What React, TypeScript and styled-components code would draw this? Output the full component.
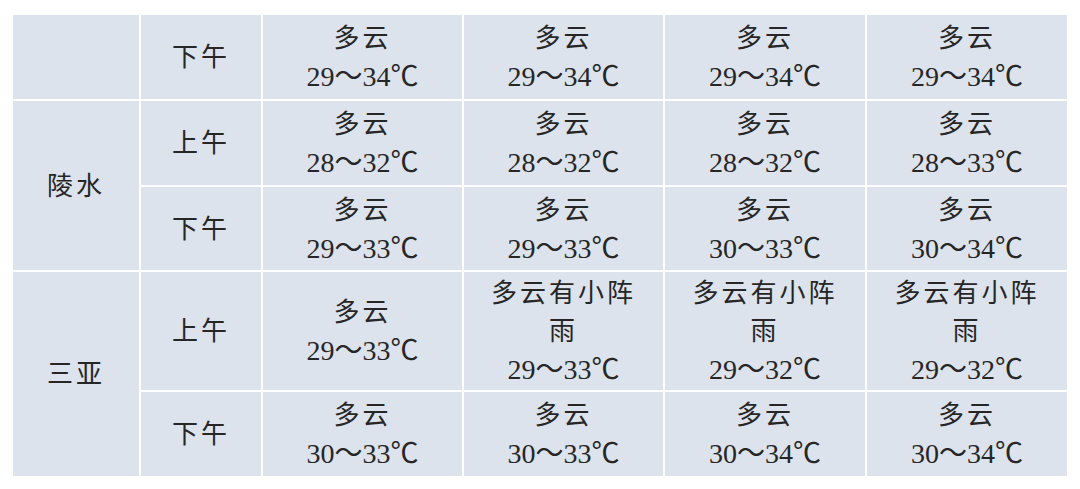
import React from 'react';
import styled, { createGlobalStyle } from 'styled-components';

const GlobalStyle = createGlobalStyle`
    html, body {
        margin: 0;
        padding: 0;
        background: #ffffff;
    }
`;

const Page = styled.div`
    padding: 15px 13px 17px 13px;
    width: 1080px;
    box-sizing: border-box;
`;

const Grid = styled.div`
    display: grid;
    grid-template-columns: 126px 120px 199px 199px 200px 200px;
    grid-template-rows: 84px 84px 83px 118px 84px;
    gap: 2px;
    background: #ffffff;
    font-family: "Liberation Serif", "Noto Sans CJK SC", serif;
    color: #262626;
`;

const Cell = styled.div<{ $row?: string }>`
    grid-row: ${(p) => p.$row || 'auto'};
    background: #dce3ed;
    display: flex;
    flex-direction: column;
    align-items: center;
    justify-content: center;
    text-align: center;
    padding: 2px 16px 0 16px;
    box-sizing: border-box;
`;

const Label = styled.span`
    font-size: 26px;
    letter-spacing: 3px;
    line-height: 38px;
`;

const Line = styled.span`
    font-size: 26px;
    line-height: 38px;
    letter-spacing: 3px;
`;

const Temp = styled.span`
    font-size: 28px;
    line-height: 38px;
`;

type Forecast = { sky: string; temp: string };

type Row = { period: string; days: Forecast[] };

const rows: Row[] = [
    {
        period: '下午',
        days: [
            { sky: '多云', temp: '29～34℃' },
            { sky: '多云', temp: '29～34℃' },
            { sky: '多云', temp: '29～34℃' },
            { sky: '多云', temp: '29～34℃' },
        ],
    },
    {
        period: '上午',
        days: [
            { sky: '多云', temp: '28～32℃' },
            { sky: '多云', temp: '28～32℃' },
            { sky: '多云', temp: '28～32℃' },
            { sky: '多云', temp: '28～33℃' },
        ],
    },
    {
        period: '下午',
        days: [
            { sky: '多云', temp: '29～33℃' },
            { sky: '多云', temp: '29～33℃' },
            { sky: '多云', temp: '30～33℃' },
            { sky: '多云', temp: '30～34℃' },
        ],
    },
    {
        period: '上午',
        days: [
            { sky: '多云', temp: '29～33℃' },
            { sky: '多云有小阵雨', temp: '29～33℃' },
            { sky: '多云有小阵雨', temp: '29～32℃' },
            { sky: '多云有小阵雨', temp: '29～32℃' },
        ],
    },
    {
        period: '下午',
        days: [
            { sky: '多云', temp: '30～33℃' },
            { sky: '多云', temp: '30～33℃' },
            { sky: '多云', temp: '30～34℃' },
            { sky: '多云', temp: '30～34℃' },
        ],
    },
];

// 地名单元格所在行（合并单元格）
const places: Record<number, { name: string; span: string }> = {
    0: { name: '', span: '1 / 2' },
    1: { name: '陵水', span: '2 / 4' },
    3: { name: '三亚', span: '4 / 6' },
};

export default function App() {
    return (
        <Page>
            <GlobalStyle />
            <Grid>
                {rows.map((row, i) => (
                    <React.Fragment key={i}>
                        {places[i] && (
                            <Cell $row={places[i].span}>
                                <Label>{places[i].name}</Label>
                            </Cell>
                        )}
                        <Cell>
                            <Label>{row.period}</Label>
                        </Cell>
                        {row.days.map((d, j) => (
                            <Cell key={j}>
                                <Line>{d.sky}</Line>
                                <Temp>{d.temp}</Temp>
                            </Cell>
                        ))}
                    </React.Fragment>
                ))}
            </Grid>
        </Page>
    );
}
